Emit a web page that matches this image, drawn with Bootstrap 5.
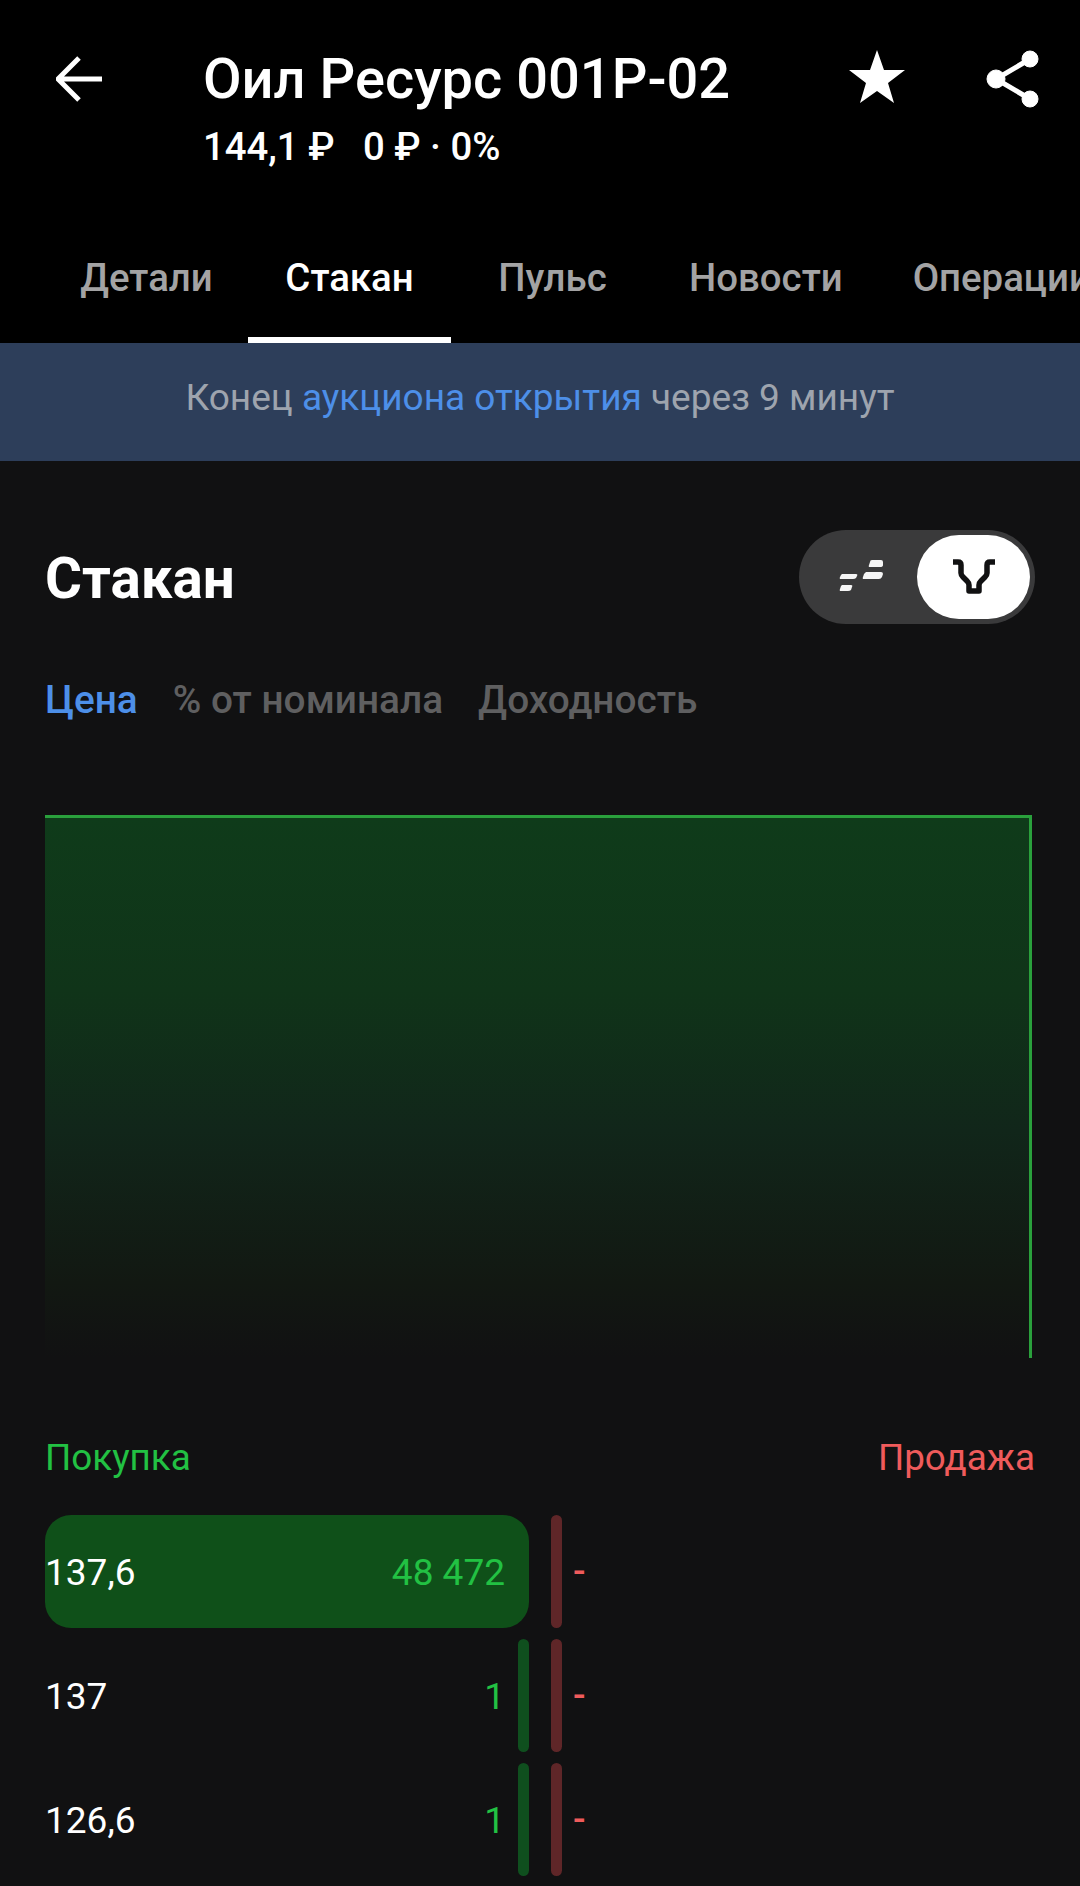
<!DOCTYPE html>
<html lang="ru">
<head>
    <meta charset="UTF-8">
    <meta name="viewport" content="width=device-width, initial-scale=1.0">
    <title>Стакан</title>
    <link rel="stylesheet" href="https://cdn.jsdelivr.net/npm/bootstrap@5.3.0/dist/css/bootstrap.min.css">
    <style>
        body {
            background-color: #111112;
            font-family: Roboto, "Liberation Sans", sans-serif;
            color: #fff;
            width: 1080px;
            height: 1886px;
            overflow: hidden;
        }
        .top-head { background: #000; height: 343px; }
        .title-bar { height: 213px; padding: 50px 40px 0 56px; }
        .back-icon { margin-top: 6px; }
        .title-col { margin-left: 101px; }
        .title-main { font-size: 56px; font-weight: 500; line-height: 58px; margin: 0; }
        .title-sub { font-size: 38.3px; font-weight: 500; line-height: 44px; margin-top: 17px; }
        .share-icon { margin-left: 81px; }
        .tab-row { height: 130px; padding-left: 45px; overflow: hidden; }
        .tab-item {
            min-width: 203px;
            padding: 0 35px 0;
            flex: none;
            font-size: 38.4px;
            font-weight: 500;
            color: #a3a3a4;
            line-height: 130px;
            text-align: center;
            height: 130px;
        }
        .tab-item.on { color: #fff; border-bottom: 6px solid #fff; }
        .info-strip {
            background: #2d3e5a;
            height: 118px;
            padding-bottom: 8px;
            color: #9ea4ae;
            font-size: 37px;
        }
        .info-strip span { color: #4d8fe8; }
        .book-wrap { padding: 0 45px; }
        .book-head { height: 217px; padding-top: 69px; }
        .book-title { font-size: 56.6px; font-weight: 700; line-height: 60px; margin: 0; padding-top: 19px; }
        .mode-switch { width: 236px; height: 94px; background: #3a3a3b; border-radius: 47px; padding: 5px; }
        .mode-left { width: 113px; }
        .mode-knob { width: 113px; height: 84px; background: #fff; border-radius: 42px; }
        .unit-tabs { font-size: 38.8px; font-weight: 500; color: #5f5f60; gap: 35px; line-height: 44px; }
        .unit-tabs .cur { color: #4d8fe8; }
        .depth-box {
            margin-top: 93px;
            margin-right: 3px;
            height: 543px;
            border-top: 3px solid #2aa03c;
            border-right: 3px solid #2aa03c;
            background: linear-gradient(180deg, #0f3b1a 0%, #103419 32%, #11261a 58%, #121812 86%, #111112 100%);
        }
        .side-labels { font-size: 36.8px; line-height: 42px; margin-top: 79px; margin-bottom: 36px; }
        .buy-txt { color: #22c143; }
        .sell-txt { color: #ef5b5b; }
        .depth-row { height: 113px; margin-bottom: 11px; font-size: 37px; }
        .buy-cell { width: 484px; }
        .buy-bar { top: 0; right: 0; bottom: 0; background: #0f4f1e; border-radius: 6px; }
        .buy-bar.wide { background: #0f5019; border-radius: 26px; }
        .buy-data { padding-top: 2px; }
        .buy-qty { color: #22c143; }
        .buy-data.full { padding-right: 24px; }
        .buy-data.thin { padding-right: 24px; }
        .sell-bar { width: 11px; margin-left: 22px; background: #5f2628; border-radius: 6px; }
        .sell-qty { color: #ef5b5b; margin-left: 11px; font-weight: 500; }
    </style>
</head>
<body>
    <header class="top-head">
        <div class="title-bar d-flex align-items-start">
            <svg class="back-icon flex-shrink-0" width="46" height="46" viewBox="0 0 46 46" fill="none" stroke="#fff" stroke-width="5"><path d="M23 2 2 23l21 21M2 23h44"/></svg>
            <div class="title-col flex-grow-1">
                <h1 class="title-main">Оил Ресурс 001Р-02</h1>
                <div class="title-sub">144,1 ₽&nbsp;&nbsp; 0 ₽ · 0%</div>
            </div>
            <svg class="flex-shrink-0" width="56" height="54" viewBox="0 0 56 54" fill="#fff"><path d="M28 0l7 20h21L39 33l6 20-17-12-17 12 6-20L0 20h21z"/></svg>
            <svg class="share-icon flex-shrink-0" width="54" height="58" viewBox="0 0 54 58" fill="#fff" stroke="#fff"><circle cx="44" cy="9" r="8"/><circle cx="10" cy="29" r="9"/><circle cx="44" cy="49" r="8"/><path fill="none" stroke-width="5" d="M44 9 10 29l34 20"/></svg>
        </div>
        <nav class="tab-row d-flex">
            <div class="tab-item">Детали</div>
            <div class="tab-item on">Стакан</div>
            <div class="tab-item">Пульс</div>
            <div class="tab-item">Новости</div>
            <div class="tab-item">Операции</div>
        </nav>
    </header>

    <div class="info-strip d-flex align-items-center justify-content-center">
        <div>Конец <span>аукциона открытия</span> через 9 минут</div>
    </div>

    <main class="book-wrap">
        <div class="book-head d-flex justify-content-between align-items-start">
            <h2 class="book-title">Стакан</h2>
            <div class="mode-switch d-flex align-items-center">
                <div class="mode-left d-flex justify-content-center">
                    <svg width="44" height="34" viewBox="0 0 44 34" fill="#f5f5f5"><path d="M3 14h14q2 0 1 2l-1 2q-1 1-3 1H2q-2 0-1-2l1-2zM3 25h9q2 0 1 2l-1 3q-1 1-3 1H2q-2 0-1-2l1-3zM27 12h15q2 0 2 2l-1 3q-1 2-3 2H25q-2 0-1-2l1-3zM33 0h9q2 0 2 2v3q0 2-3 2H31q-2 0-1-2l1-3q0-2 2-2z"/></svg>
                </div>
                <div class="mode-knob d-flex align-items-center justify-content-center">
                    <svg width="44" height="36" viewBox="0 0 44 36" fill="none" stroke="#111112" stroke-width="5.5" stroke-linejoin="round"><path d="M1 3h5q3 0 3 3v8q0 2 2 4l4 4q2 2 2 4v6h10v-6q0-2 2-4l4-4q2-2 2-4V6q0-3 3-3h5"/></svg>
                </div>
            </div>
        </div>

        <div class="unit-tabs d-flex">
            <div class="cur">Цена</div>
            <div>% от номинала</div>
            <div>Доходность</div>
        </div>

        <div class="depth-box"></div>

        <div class="side-labels d-flex justify-content-between">
            <div class="buy-txt">Покупка</div>
            <div class="sell-txt">Продажа</div>
        </div>

        <div class="depth-row d-flex">
            <div class="buy-cell position-relative">
                <div class="buy-bar wide position-absolute" style="width: 100%"></div>
                <div class="buy-data full position-relative h-100 d-flex justify-content-between align-items-center">
                    <span>137,6</span><span class="buy-qty">48 472</span>
                </div>
            </div>
            <div class="sell-bar"></div>
            <div class="sell-qty d-flex align-items-center">-</div>
        </div>
        <div class="depth-row d-flex">
            <div class="buy-cell position-relative">
                <div class="buy-bar position-absolute" style="width: 11px"></div>
                <div class="buy-data thin position-relative h-100 d-flex justify-content-between align-items-center">
                    <span>137</span><span class="buy-qty">1</span>
                </div>
            </div>
            <div class="sell-bar"></div>
            <div class="sell-qty d-flex align-items-center">-</div>
        </div>
        <div class="depth-row d-flex">
            <div class="buy-cell position-relative">
                <div class="buy-bar position-absolute" style="width: 11px"></div>
                <div class="buy-data thin position-relative h-100 d-flex justify-content-between align-items-center">
                    <span>126,6</span><span class="buy-qty">1</span>
                </div>
            </div>
            <div class="sell-bar"></div>
            <div class="sell-qty d-flex align-items-center">-</div>
        </div>
    </main>

    <script src="https://cdn.jsdelivr.net/npm/bootstrap@5.3.0/dist/js/bootstrap.bundle.min.js"></script>
</body>
</html>
